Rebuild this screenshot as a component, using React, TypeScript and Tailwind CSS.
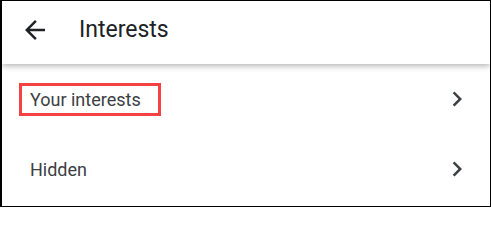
const ArrowBack = () => (
  <svg width="30" height="30" viewBox="0 0 24 24" fill="#202124">
    <path d="M20 11H7.83l5.59-5.59L12 4l-8 8 8 8 1.41-1.41L7.83 13H20v-2z" />
  </svg>
);

const Chevron = () => (
  <svg width="30" height="30" viewBox="0 0 24 24" fill="#3c4043">
    <path d="M10 6L8.59 7.41 13.17 12l-4.58 4.59L10 18l6-6z" />
  </svg>
);

export default function App() {
  return (
    <div
      className="w-[491px] h-[207px] bg-white border-t border-b border-r border-l-2 border-black overflow-hidden flex flex-col"
      style={{ fontFamily: "Roboto, 'Noto Sans', sans-serif" }}
    >
      {/* Top bar */}
      <header className="relative z-10 h-[63px] shrink-0 flex items-center pb-[6px] pl-[18px] bg-white shadow-[0_2px_6px_rgba(0,0,0,0.3)]">
        <ArrowBack />
        <h1 className="ml-[29px] text-[23px] text-[#202124] leading-none">Interests</h1>
      </header>

      {/* List */}
      <div className="flex-1 flex flex-col">
        <div className="h-[70px] flex items-center justify-between pl-[17px] pr-[18px]">
          <div className="w-[142px] h-[33px] border-[3px] border-[#f44141] flex items-center pl-[8px] text-[18px] text-[#3c4043]">
            Your interests
          </div>
          <Chevron />
        </div>
        <div className="h-[70px] flex items-center justify-between pl-[28px] pr-[18px]">
          <span className="text-[18px] text-[#3c4043]">Hidden</span>
          <Chevron />
        </div>
      </div>
    </div>
  );
}
